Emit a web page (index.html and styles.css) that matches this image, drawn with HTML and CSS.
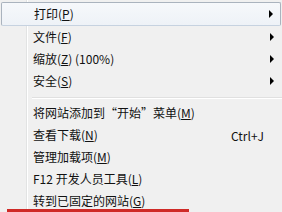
FILE: index.html
```html
<!DOCTYPE html>
<html>
<head>
<meta charset="utf-8">
<link rel="stylesheet" href="styles.css">
</head>
<body>
<div class="menu">
  <div class="item hover"><span class="label">打印(<u>P</u>)</span><span class="arrow"></span></div>
  <div class="item"><span class="label">文件(<u>F</u>)</span><span class="arrow"></span></div>
  <div class="item"><span class="label">缩放(<u>Z</u>) (100%)</span><span class="arrow"></span></div>
  <div class="item"><span class="label">安全(<u>S</u>)</span><span class="arrow"></span></div>
  <div class="sep"></div>
  <div class="item"><span class="label">将网站添加到“开始”菜单(<u>M</u>)</span></div>
  <div class="item"><span class="label">查看下载(<u>N</u>)</span><span class="shortcut">Ctrl+J</span></div>
  <div class="item"><span class="label">管理加载项(<u>M</u>)</span></div>
  <div class="item"><span class="label">F12 开发人员工具(<u>L</u>)</span></div>
  <div class="item"><span class="label">转到已固定的网站(<u>G</u>)</span></div>
  <div class="redbox"></div>
</div>
</body>
</html>
```
FILE: styles.css
```css
html, body {
  margin: 0;
  padding: 0;
}
body {
  background: #f0f0f0;
  font-family: "Noto Sans CJK SC", "Noto Sans", sans-serif;
  font-size: 12px;
  color: #111;
  width: 282px;
  height: 212px;
  overflow: hidden;
}
.menu {
  position: relative;
  padding-top: 4px;
  height: 212px;
  box-sizing: border-box;
  background:
    linear-gradient(to right, transparent 26px, #e2e3e3 26px, #e2e3e3 27px, #ffffff 27px, #ffffff 28px, transparent 28px),
    #f0f0f0;
}
.item {
  display: flex;
  align-items: center;
  height: 22px;
  padding-left: 33px;
  padding-right: 8px;
  box-sizing: border-box;
  white-space: nowrap;
}
.item.hover {
  margin: -2px 1px 0 1px;
  height: 24px;
  padding-left: 32px;
  padding-right: 7px;
  border: 1px solid #aab3be;
  border-bottom-color: #c6d2e0;
  border-radius: 2px;
  background: linear-gradient(to bottom, #f6f8fb, #eef2f7);
}
.label {
  flex: 1;
  line-height: 22px;
}
.arrow {
  width: 0;
  height: 0;
  border-left: 4px solid #000;
  border-top: 4px solid transparent;
  border-bottom: 4px solid transparent;
}
.shortcut {
  margin-right: 10px;
}
.sep {
  height: 10px;
  margin-left: 32px;
  background: linear-gradient(to bottom, transparent 5px, #e0e0e0 5px, #e0e0e0 6px, #ffffff 6px, #ffffff 7px, transparent 7px);
}
.redbox {
  position: absolute;
  left: 7px;
  top: 209px;
  width: 182px;
  height: 12px;
  border: 3px solid #cf2a27;
  box-sizing: border-box;
}
```
